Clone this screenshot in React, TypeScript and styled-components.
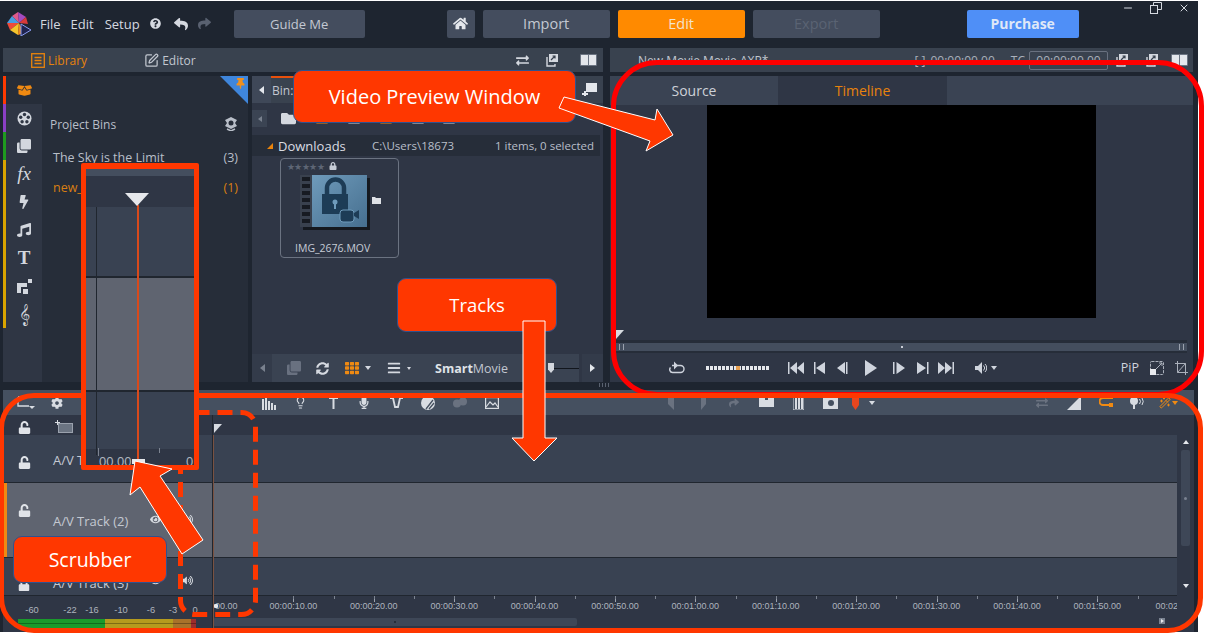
import React, { ReactNode } from "react";
import styled, { createGlobalStyle } from "styled-components";
import {
  FaBoxOpen, FaClone, FaBolt, FaMusic, FaHome, FaQuestionCircle, FaReply, FaShare, FaThumbtack,
  FaExchangeAlt, FaLock, FaUnlock, FaVolumeUp, FaEye, FaCog, FaMicrophone, FaSyncAlt, FaBars, FaTh,
  FaFolder,
} from "react-icons/fa";
import { SquarePen, Minus, X, Wand2, Lightbulb } from "lucide-react";

const GlobalStyle = createGlobalStyle`
  html, body { margin: 0; padding: 0; background: #ffffff; }
  body { width: 1212px; height: 642px; overflow: hidden; font-family: "Open Sans", "Noto Sans", sans-serif; }
  * { box-sizing: border-box; }
`;

const Page = styled.div`
  position: relative;
  width: 1212px;
  height: 642px;
  background: #fff;
  overflow: hidden;
  padding-top: 1px;
`;

const AppWindow = styled.div`
  width: 1198px;
  height: 631px;
  background: #1e2530;
  color: #c6ccd6;
  display: flex;
  flex-direction: column;
  padding: 0 1px 0 3px;
`;

const TitleBar = styled.div`
  height: 47px;
  flex: none;
  display: flex;
  align-items: center;
  position: relative;
  padding-bottom: 2px;
`;

const Logo = styled.svg`
  width: 24px;
  height: 24px;
  margin-left: 4px;
  flex: none;
`;

const MenuItem = styled.span<{ $ml: number }>`
  font-size: 13px;
  color: #d5d9e0;
  margin-left: ${(p) => p.$ml}px;
`;

const HeadButton = styled.div<{ $w: number; $ml: number; $bg?: string; $fg?: string; $bold?: boolean; $size?: number }>`
  width: ${(p) => p.$w}px;
  height: 28px;
  margin-left: ${(p) => p.$ml}px;
  background: ${(p) => p.$bg || "#444d5e"};
  color: ${(p) => p.$fg || "#c3c8d2"};
  font-size: ${(p) => p.$size || 13}px;
  font-weight: ${(p) => (p.$bold ? 700 : 400)};
  border-radius: 2px;
  display: flex;
  align-items: center;
  justify-content: center;
  flex: none;
`;

const HeadIcon = styled.span<{ $ml: number; $fg?: string }>`
  margin-left: ${(p) => p.$ml}px;
  color: ${(p) => p.$fg || "#d5d9e0"};
  display: flex;
`;

const WindowControls = styled.div`
  position: absolute;
  top: 0;
  right: 7px;
  display: flex;
  align-items: center;
  gap: 16px;
  height: 13px;
  color: #d5d9e0;
`;

const Upper = styled.div`
  height: 334px;
  flex: none;
  display: flex;
  gap: 7px;
  position: relative;
`;

const Grip = styled.span`
  position: absolute;
  left: 596px;
  bottom: -5px;
  width: 10px;
  height: 4px;
  background: repeating-linear-gradient(90deg, #59616f 0 1px, transparent 1px 3px);
`;

const LeftPanel = styled.div`
  width: 600px;
  flex: none;
  display: flex;
  flex-direction: column;
`;

const RightPanel = styled.div`
  flex: 1;
  min-width: 0;
  display: flex;
  flex-direction: column;
  margin-right: 4px;
`;

const TabBar = styled.div<{ $pr: number }>`
  height: 24px;
  flex: none;
  background: #39424f;
  display: flex;
  align-items: center;
  font-size: 12px;
  color: #c2c7d0;
  padding-right: ${(p) => p.$pr}px;
`;

const BarTab = styled.span<{ $ml: number; $active?: boolean }>`
  display: flex;
  align-items: center;
  gap: 3px;
  margin-left: ${(p) => p.$ml}px;
  color: ${(p) => (p.$active ? "#e8830c" : "#c2c7d0")};
`;

const Timecode = styled.span<{ $ml?: number }>`
  margin-left: ${(p) => p.$ml || 0}px;
  color: #aab0bb;
  font-size: 12px;
  white-space: nowrap;
`;

const TimecodeBox = styled.span`
  width: 79px;
  height: 19px;
  margin-left: 4px;
  border: 1px solid #697180;
  border-radius: 2px;
  display: flex;
  align-items: center;
  justify-content: center;
  color: #aab0bb;
`;

const BarSpacer = styled.div`
  flex: 1;
`;

const BarIcon = styled.span<{ $ml?: number }>`
  display: flex;
  margin-left: ${(p) => p.$ml || 0}px;
  color: #d4d8df;
`;

const SplitIcon = styled.span`
  width: 17px;
  height: 12px;
  display: flex;
  gap: 1px;
  padding: 1px;
  background: #6b7482;
  border-radius: 1px;

  &::before, &::after {
    content: "";
    flex: 1;
    background: #e4e7ec;
  }
`;

const LeftBody = styled.div`
  flex: 1;
  min-height: 0;
  margin-top: 4px;
  display: flex;
`;

const Rail = styled.div`
  width: 39px;
  flex: none;
  display: flex;
  flex-direction: column;
  background: #2f3644;
  position: relative;
  padding-left: 3px;
`;

const RailItem = styled.div<{ $active?: boolean; $stripe?: string }>`
  height: 28px;
  display: flex;
  align-items: center;
  justify-content: center;
  position: relative;
  color: ${(p) => (p.$active ? "#f08a12" : "#d3d7de")};
  background: ${(p) => (p.$active ? "#262d39" : "transparent")};
  font-family: "Liberation Serif", serif;
  font-size: 19px;

  &::before {
    content: "";
    position: absolute;
    left: -3px;
    top: 0;
    bottom: 0;
    width: 3px;
    background: ${(p) => p.$stripe || "transparent"};
  }
`;

const Bins = styled.div`
  width: 206px;
  flex: none;
  background: #262d39;
  position: relative;
  font-size: 12.5px;
  padding: 38px 0 0 8px;
`;

const Corner = styled.div`
  position: absolute;
  top: 0;
  right: 0;
  width: 0;
  height: 0;
  border-top: 28px solid #3f86dc;
  border-left: 28px solid transparent;
`;

const CornerPin = styled.span`
  position: absolute;
  top: 2px;
  right: 2px;
  color: #f0901e;
  display: flex;
`;

const BinsHead = styled.div`
  display: flex;
  justify-content: space-between;
  align-items: center;
  height: 20px;
  padding-right: 9px;
  margin-bottom: 8px;
  color: #b9bfc9;
  font-size: 12px;
`;

const BinRow = styled.div<{ $active?: boolean }>`
  display: flex;
  justify-content: space-between;
  height: 30px;
  align-items: center;
  padding: 0 10px 0 3px;
  color: ${(p) => (p.$active ? "#d97f12" : "#b9bfc9")};
`;

const Browser = styled.div`
  flex: 1;
  min-width: 0;
  margin-left: 4px;
  background: #2f3645;
  display: flex;
  flex-direction: column;
  font-size: 12px;
`;

const BinBar = styled.div`
  height: 27px;
  flex: none;
  background: #39424f;
  display: flex;
  align-items: stretch;
  color: #c2c7d0;
  padding-right: 6px;
`;

const BinCap = styled.span`
  width: 19px;
  flex: none;
  background: #3f4858;
  display: flex;
  align-items: center;
  justify-content: center;
  color: #e4e7ec;
`;

const BinLabel = styled.span`
  flex: 1;
  border-top: 2px solid transparent;
  border-image: linear-gradient(90deg, #e8500c 0 24px, transparent 24px) 1;
  display: flex;
  align-items: center;
  padding-left: 1px;
`;

const BinEndIcon = styled.span`
  display: flex;
  align-items: center;
  color: #e4e7ec;
`;

const BrowserTools = styled.div`
  height: 17px;
  margin-top: 7px;
  flex: none;
  display: flex;
  align-items: center;
  color: #d4d8df;
`;

const ToolCap = styled.span`
  width: 15px;
  height: 17px;
  background: #3b4453;
  color: #79818e;
  display: flex;
  align-items: center;
  justify-content: center;
`;

const ToolSlot = styled.span<{ $ml: number; $fg?: string }>`
  margin-left: ${(p) => p.$ml}px;
  color: ${(p) => p.$fg || "#d4d8df"};
  display: flex;
`;

const Caret = styled.span<{ $dir: "left" | "right" | "up" | "down"; $c?: string; $s?: number; $ml?: number }>`
  width: 0;
  height: 0;
  flex: none;
  margin-left: ${(p) => p.$ml || 0}px;
  border: ${(p) => p.$s || 4}px solid transparent;
  ${(p) => {
    const c = p.$c || "currentColor";
    const s = (p.$s || 4) + 1;
    if (p.$dir === "left") return `border-right: ${s}px solid ${c}; border-left-width: 0;`;
    if (p.$dir === "right") return `border-left: ${s}px solid ${c}; border-right-width: 0;`;
    if (p.$dir === "up") return `border-bottom: ${s}px solid ${c}; border-top-width: 0;`;
    return `border-top: ${s}px solid ${c}; border-bottom-width: 0;`;
  }}
`;

const CornerCaret = styled.span`
  width: 0;
  height: 0;
  border-bottom: 6px solid #e8830c;
  border-left: 6px solid transparent;
`;

const FolderHead = styled.div`
  height: 21px;
  flex: none;
  margin: 8px 3px 0 0;
  background: #262d39;
  display: flex;
  align-items: center;
  padding-left: 15px;
  color: #b9bfc9;
  font-size: 11.5px;
`;

const FolderName = styled.span`
  font-size: 13px;
  color: #dadde3;
  margin-left: 5px;
  width: 94px;
`;

const FolderInfo = styled.span<{ $w: number }>`
  width: ${(p) => p.$w}px;
  white-space: nowrap;
`;

const BrowserArea = styled.div`
  flex: 1;
  min-height: 0;
  padding: 2px 0 0 28px;
`;

const ThumbCard = styled.div`
  width: 119px;
  height: 100px;
  border: 1.5px solid #6b7381;
  border-radius: 4px;
  padding: 2px 6px 0;
  display: flex;
  flex-direction: column;
  color: #c6ccd6;
  font-size: 10.5px;
`;

const ThumbTop = styled.div`
  height: 10px;
  display: flex;
  align-items: center;
  gap: 5px;
  font-size: 9px;
  color: #5e6675;
  letter-spacing: -0.6px;
`;

const ThumbArt = styled.svg`
  width: 86px;
  height: 66px;
  margin: 1px 0 3px 8px;
`;

const ThumbName = styled.span`
  margin-left: 8px;
  white-space: nowrap;
`;

const BrowserFooter = styled.div`
  height: 28px;
  flex: none;
  background: #3a4352;
  display: flex;
  align-items: center;
  color: #d3d7de;
  font-size: 12px;
`;

const FooterCap = styled.span<{ $w: number }>`
  width: ${(p) => p.$w}px;
  height: 100%;
  flex: none;
  background: #333b4a;
  color: #79818e;
  display: flex;
  align-items: center;
  justify-content: center;
`;

const FooterEnd = styled(FooterCap)`
  margin-left: auto;
  color: #e4e7ec;
  border-left: 3px solid #2f3645;
`;

const FooterIcon = styled.span<{ $ml: number; $fg?: string }>`
  margin-left: ${(p) => p.$ml}px;
  color: ${(p) => p.$fg || "#d5d9e0"};
  display: flex;
  align-items: center;
  gap: 6px;
`;

const Smart = styled.span`
  margin-left: 24px;
  font-size: 12.5px;
  color: #c2c7d0;

  b {
    color: #dfe2e7;
  }
`;

const SlideKnob = styled.span`
  width: 32px;
  height: 10px;
  margin-left: 40px;
  position: relative;
  display: block;

  &::before {
    content: "";
    position: absolute;
    left: 0;
    right: 0;
    top: 5px;
    height: 1px;
    background: #12161d;
  }

  &::after {
    content: "";
    position: absolute;
    left: 0;
    top: 0;
    width: 6px;
    height: 10px;
    background: #d3d7de;
    clip-path: polygon(0 0, 100% 0, 100% 65%, 50% 100%, 0 65%);
  }
`;

const Tabs = styled.div`
  height: 29px;
  margin-top: 4px;
  flex: none;
  background: #3a4353;
  display: flex;
  font-size: 14px;
`;

const PreviewTab = styled.div<{ $w: number; $active?: boolean }>`
  width: ${(p) => p.$w}px;
  display: flex;
  align-items: center;
  justify-content: center;
  background: ${(p) => (p.$active ? "#2f3645" : "transparent")};
  color: ${(p) => (p.$active ? "#e8830c" : "#cdd1d8")};
`;

const PreviewBody = styled.div`
  flex: 1;
  min-height: 0;
  background: #2f3645;
  display: flex;
  flex-direction: column;
`;

const VideoWrap = styled.div`
  height: 213px;
  flex: none;
  display: flex;
  justify-content: center;
`;

const VideoScreen = styled.div`
  width: 389px;
  height: 100%;
  background: #000;
`;

const ScrubberMark = styled.div`
  height: 22px;
  flex: none;
  display: flex;
  align-items: flex-end;
  padding: 0 0 1px 6px;
`;

const Flag = styled.span`
  display: block;
  width: 0;
  height: 0;
  border-top: 9px solid #d7dbe1;
  border-right: 8px solid transparent;
`;

const ScrollTrack = styled.div`
  height: 13px;
  flex: none;
  background: #444e5e;
  border-top: 3px solid #262d39;
  border-bottom: 2px solid #262d39;
  margin: 0 6px;
  display: flex;
  align-items: center;
  justify-content: center;
  position: relative;

  &::before {
    content: "";
    width: 2px;
    height: 2px;
    background: #c9ced6;
  }
`;

const ScrollHandle = styled.span<{ $side: "left" | "right" }>`
  position: absolute;
  ${(p) => p.$side}: 3px;
  top: 1px;
  width: 5px;
  height: 6px;
  border-left: 1px solid #9aa1ad;
  border-right: 1px solid #9aa1ad;
`;

const Transport = styled.div`
  flex: 1;
  display: flex;
  align-items: center;
  color: #cfd4dd;
`;

const ShuttleBar = styled.div`
  width: 63px;
  height: 4px;
  margin-left: 21px;
  background: repeating-linear-gradient(90deg, #e6e8ec 0 3px, #2f3645 3px 4px);
  position: relative;

  &::after {
    content: "";
    position: absolute;
    left: 30px;
    top: 0;
    width: 4px;
    height: 4px;
    background: #e8a050;
  }
`;

const TransportIcon = styled.svg<{ $ml: number }>`
  margin-left: ${(p) => p.$ml}px;
  flex: none;
  fill: currentColor;
`;

const PipLabel = styled.span`
  margin-left: auto;
  font-size: 12.5px;
`;

const PipBox = styled.svg`
  margin-left: 11px;
  color: #aab0bb;
  flex: none;
`;

const PipEnd = styled.span`
  width: 5px;
  flex: none;
`;

const Timeline = styled.div`
  flex: 1;
  min-height: 0;
  margin: 8px 3px 0 0;
  display: flex;
  flex-direction: column;
  background: #2f3645;
`;

const TimelineTools = styled.div`
  height: 25px;
  flex: none;
  background: #455060;
  display: flex;
  align-items: center;
  color: #d8dce2;
`;

const TlIcon = styled.span<{ $ml: number; $w: number; $fg?: string }>`
  display: flex;
  align-items: center;
  justify-content: center;
  flex: none;
  width: ${(p) => p.$w}px;
  margin-left: ${(p) => p.$ml}px;
  color: ${(p) => p.$fg || "#d8dce2"};
`;

const TlGrid = styled.div`
  flex: 1;
  min-height: 0;
  display: flex;
`;

const TrackCol = styled.div`
  width: 210px;
  flex: none;
  display: flex;
  flex-direction: column;
  border-right: 1px solid #20262f;
`;

const TimeCol = styled.div`
  flex: 1;
  min-width: 0;
  display: flex;
  flex-direction: column;
  position: relative;

  &::before {
    content: "";
    position: absolute;
    left: 0;
    top: 20px;
    bottom: 0;
    width: 1px;
    background: #7a5242;
    z-index: 1;
  }
`;

const HeadRow = styled.div<{ $h: number; $sel?: boolean; $bg?: string }>`
  height: ${(p) => p.$h}px;
  flex: none;
  background: ${(p) => p.$bg || (p.$sel ? "#5f6470" : "#394252")};
  border-bottom: ${(p) => (p.$bg ? "none" : "1px solid #20262f")};
  color: #c4c9d2;
  font-size: 13px;
  position: relative;
  ${(p) => (p.$sel ? "box-shadow: inset 4px 0 0 #f08a12;" : "")}
`;

const LockIcon = styled.span<{ $top: number }>`
  position: absolute;
  left: 15px;
  top: ${(p) => p.$top}px;
  color: #e0e3e8;
  display: flex;
`;

const AddTrack = styled.span`
  position: absolute;
  left: 52px;
  top: 5px;
  color: #9aa1ad;
  display: flex;
`;

const TrackName = styled.span<{ $top: number }>`
  position: absolute;
  left: 50px;
  top: ${(p) => p.$top}px;
  white-space: nowrap;
`;

const TrackIcons = styled.span<{ $top: number }>`
  position: absolute;
  left: 147px;
  top: ${(p) => p.$top}px;
  display: flex;
  gap: 21px;
  color: #d6dae0;
`;

const RulerTop = styled.div`
  height: 20px;
  flex: none;
  background: #2f3645;
  padding: 9px 0 0 1px;
`;

const Lanes = styled.div`
  flex: 1;
  min-height: 0;
  display: flex;
`;

const LaneStack = styled.div`
  flex: 1;
  min-width: 0;
  display: flex;
  flex-direction: column;
`;

const VScroll = styled.div`
  width: 17px;
  flex: none;
  background: #2f3645;
  display: flex;
  flex-direction: column;
  align-items: center;
  color: #e4e7ec;
  padding-top: 5px;
`;

const VThumb = styled.div`
  width: 9px;
  height: 96px;
  margin: 6px 0 38px;
  background: #3e4757;
  border-radius: 2px;
  display: flex;
  align-items: center;
  justify-content: center;

  &::before {
    content: "";
    width: 3px;
    height: 3px;
    background: #7a8290;
    border-radius: 50%;
  }
`;

const Lane = styled.div<{ $h: number; $sel?: boolean }>`
  height: ${(p) => p.$h}px;
  flex: none;
  background: ${(p) => (p.$sel ? "#5f6470" : "#394252")};
  border-bottom: 1px solid #20262f;
`;

const RulerRow = styled.div`
  height: 36px;
  flex: none;
  background: #2f3645;
  display: flex;
  flex-direction: column;
  position: relative;
`;

const Ruler = styled.div`
  height: 22px;
  flex: none;
  width: 964px;
  display: flex;
  background:
    repeating-linear-gradient(90deg, #7d8491 0 1px, transparent 1px 40.2px) 0 0 / 100% 3px no-repeat,
    repeating-linear-gradient(90deg, #9aa1ad 0 1px, transparent 1px 80.4px) 0 0 / 100% 6px no-repeat;
  overflow: hidden;
`;

const RulerLabel = styled.span`
  width: 80.4px;
  flex: none;
  text-align: center;
  font-family: "Liberation Sans", sans-serif;
  font-size: 9px;
  color: #aeb4be;
  padding-top: 5px;

  &:first-child {
    width: 40.2px;
    text-align: left;
    padding-left: 2px;
  }

  &:last-child {
    width: 40px;
    text-align: left;
    padding-left: 18px;
  }
`;

const RulerKnob = styled.span`
  position: absolute;
  left: 1px;
  top: 8px;
  width: 4px;
  height: 4px;
  background: #e6e8ec;
  border-radius: 1px;
`;

const HScroll = styled.div`
  height: 8px;
  width: 364px;
  background: #3e4757;
  border-radius: 2px;
  display: flex;
  align-items: center;
  justify-content: center;

  &::before {
    content: "";
    width: 2px;
    height: 2px;
    background: #262d39;
  }
`;

const Nudge = styled.span`
  position: absolute;
  right: 29px;
  bottom: 8px;
  width: 6px;
  height: 6px;
  background: #7a8290;
  color: #e8eaee;
  display: flex;
  align-items: center;
  justify-content: center;
`;

const MeterCol = styled.div`
  flex: 1;
  position: relative;
  background: #2f3645;
  font-family: "Liberation Sans", sans-serif;
  font-size: 9.3px;
  color: #aeb4be;
`;

const MeterLabel = styled.span<{ $x: number }>`
  position: absolute;
  top: 9px;
  left: ${(p) => p.$x}px;
  transform: translateX(-50%);
`;

const MeterBar = styled.div`
  position: absolute;
  left: 15px;
  bottom: 4px;
  height: 9px;
  display: flex;

  &::after {
    content: "";
    position: absolute;
    left: 0;
    right: 0;
    top: 4px;
    height: 1px;
    background: rgba(0, 0, 0, 0.3);
  }
`;

const MeterSeg = styled.span<{ $w: number; $c: string }>`
  width: ${(p) => p.$w}px;
  background: ${(p) => p.$c};
`;

/* annotations drawn over the screenshot */
const Callout = styled.div<{ $x: number; $y: number; $w: number; $h: number; $size: number }>`
  position: absolute;
  left: ${(p) => p.$x}px;
  top: ${(p) => p.$y}px;
  width: ${(p) => p.$w}px;
  height: ${(p) => p.$h}px;
  background: #ff3700;
  border: 1px solid #2f528f;
  border-radius: 9px;
  color: #fff;
  font-size: ${(p) => p.$size}px;
  display: flex;
  align-items: center;
  justify-content: center;
  padding-bottom: 1px;
  z-index: 6;
`;

const Frame = styled.div<{ $x: number; $y: number; $w: number; $h: number; $c: string; $r: number; $b: number; $z: number }>`
  position: absolute;
  left: ${(p) => p.$x}px;
  top: ${(p) => p.$y}px;
  width: ${(p) => p.$w}px;
  height: ${(p) => p.$h}px;
  border: ${(p) => p.$b}px solid ${(p) => p.$c};
  border-radius: ${(p) => p.$r}px;
  z-index: ${(p) => p.$z};
`;

const Magnifier = styled.div`
  position: absolute;
  left: 81px;
  top: 163px;
  width: 118px;
  height: 307px;
  border: 5px solid #ff3700;
  border-top-width: 6px;
  border-radius: 2px;
  background: #394252;
  z-index: 5;
  display: flex;
  flex-direction: column;
  overflow: hidden;
`;

const MagBand = styled.div<{ $h: number; $bg: string; $line?: boolean }>`
  height: ${(p) => p.$h}px;
  flex: none;
  background: ${(p) => p.$bg};
  border-bottom: ${(p) => (p.$line ? "2px solid #20262f" : "none")};
`;

const MagRule = styled.div`
  position: absolute;
  left: 10px;
  top: 38px;
  bottom: 10px;
  width: 1px;
  background: #20262f;
`;

const MagCursor = styled.div`
  position: absolute;
  left: 51px;
  top: 36px;
  bottom: 0;
  width: 2px;
  background: #d84a1c;
`;

const MagHandle = styled.div`
  position: absolute;
  left: 39px;
  top: 24px;
  width: 0;
  height: 0;
  border-left: 12px solid transparent;
  border-right: 12px solid transparent;
  border-top: 13px solid #e6e8ec;
`;

const MagTick = styled.span<{ $x: number; $h: number }>`
  position: absolute;
  left: ${(p) => p.$x}px;
  top: 279px;
  width: 1px;
  height: ${(p) => p.$h}px;
  background: #7d8491;
`;

const MagTime = styled.span<{ $x: number }>`
  position: absolute;
  left: ${(p) => p.$x}px;
  bottom: -4px;
  font-family: "Liberation Sans", sans-serif;
  font-size: 13px;
  color: #aeb4be;
`;

const MagKnob = styled.span`
  position: absolute;
  left: 46px;
  bottom: 1px;
  width: 13px;
  height: 5px;
  background: #e6e8ec;
`;

const Overlay = styled.svg<{ $z: number }>`
  position: absolute;
  left: 0;
  top: 0;
  width: 1212px;
  height: 642px;
  z-index: ${(p) => p.$z};
  pointer-events: none;
`;

const Glyph = ({ w, h, children }: { w: number; h: number; children: ReactNode }) => (
  <svg width={w} height={h} viewBox={`0 0 ${w} ${h}`} fill="currentColor">
    {children}
  </svg>
);

const PopIcon = () => (
  <Glyph w={13} h={13}>
    <path d="M2 3v9h8v-2" fill="none" stroke="currentColor" strokeWidth="1.4" />
    <rect x="4" y="0" width="9" height="8" />
    <path d="M6 6l4-4M7.500 2H10v2.500" fill="none" stroke="#39424f" strokeWidth="1.2" />
  </Glyph>
);

const ReelIcon = () => (
  <Glyph w={15} h={15}>
    <circle cx="7.500" cy="7.500" r="7" />
    <g fill="#2f3644">
      <circle cx="7.500" cy="3.500" r="1.700" />
      <circle cx="11.300" cy="6.300" r="1.700" />
      <circle cx="9.900" cy="10.800" r="1.700" />
      <circle cx="5.100" cy="10.800" r="1.700" />
      <circle cx="3.700" cy="6.300" r="1.700" />
    </g>
  </Glyph>
);

const LibraryIcon = () => (
  <svg width="14" height="15" viewBox="0 0 14 15" fill="none" stroke="currentColor" strokeWidth="1.3">
    <rect x="0.700" y="0.700" width="12.600" height="13.600" />
    <path d="M3.500 4.500h7M3.500 7.500h7M3.500 10.500h7" />
  </svg>
);

const OverlayIcon = () => (
  <Glyph w={15} h={15}>
    <rect x="0" y="4" width="10" height="10" />
    <rect x="4" y="8" width="6" height="6" fill="#2f3644" />
    <rect x="6" y="10" width="5" height="5" />
    <rect x="11" y="0" width="4" height="4" />
  </Glyph>
);

const BinSettingsIcon = () => (
  <Glyph w={16} h={14}>
    <path d="M8 0l6 3-2 3 2 3-6 3-6-3 2-3-2-3z" />
    <circle cx="8" cy="6" r="2.500" fill="#262d39" />
    <path d="M4 12l4 2 4-2" fill="none" stroke="currentColor" strokeWidth="1.500" />
  </Glyph>
);

const AddBinIcon = () => (
  <Glyph w={15} h={13}>
    <rect x="4" y="0" width="11" height="9" />
    <path d="M2 8h2v2h2v2H4v1H2v-1H0v-2h2z" />
  </Glyph>
);

const AddTrackIcon = () => (
  <svg width="18" height="13" viewBox="0 0 18 13" fill="none" stroke="currentColor">
    <rect x="3.500" y="3.500" width="14" height="9" fill="#6b7482" />
    <path d="M2.500 0v5M0 2.500h5" stroke="#d8dce2" />
  </svg>
);

const RestoreIcon = () => (
  <svg width="12" height="12" viewBox="0 0 12 12" fill="none" stroke="currentColor" strokeWidth="1">
    <rect x="0.500" y="3.500" width="7" height="8" />
    <path d="M3.500 3.500v-3h8v7h-4" />
  </svg>
);

const RepeatIcon = () => (
  <TransportIcon $ml={59} width="16" height="13" viewBox="0 0 16 13">
    <path d="M3 4.500h8.500a3.500 3.500 0 0 1 0 7h-8a3 3 0 0 1-2-5" fill="none" stroke="currentColor" strokeWidth="1.400" />
    <path d="M5 0.500l4 4-4 4z" />
  </TransportIcon>
);

const TrackModeIcon = () => (
  <svg width="18" height="15" viewBox="0 0 18 15" fill="none" stroke="currentColor" strokeWidth="1.300">
    <path d="M1 2h14M1 2v9h11" />
    <path d="M12 11h6l-3 3z" fill="currentColor" stroke="none" />
  </svg>
);

const Shield = () => (
  <Glyph w={7} h={14}>
    <path d="M0 0h7v9l-3.500 5L0 9z" />
  </Glyph>
);

const toolbar: [number, number, ReactNode, string?][] = [
  [17, 35, <TrackModeIcon />],
  [51, 63, <FaCog size={12} />],
  [262, 276, <Glyph w={14} h={14}><path d="M0 3h2v11H0zM3 0h2v14H3zM6 5h2v9H6zM9 7h2v7H9zM12 9h2v5h-2z" /></Glyph>],
  [294, 307, <Lightbulb size={13} />],
  [329, 338, <Glyph w={9} h={12}><path d="M0 0h9v2H5.500v10H3.500V2H0z" /></Glyph>],
  [358, 370, <FaMicrophone size={13} />],
  [390, 403, <svg width="13" height="12" viewBox="0 0 13 12" fill="none" stroke="currentColor" strokeWidth="1.800"><path d="M0 1h3l2 9h3l2-9h3" /></svg>],
  [421, 435, <Glyph w={14} h={14}><circle cx="7" cy="7" r="7" /><path d="M5 13l7-9M8 13l5-6" stroke="#455060" strokeWidth="1.300" /></Glyph>],
  [453, 467, <Glyph w={14} h={11}><circle cx="4" cy="6.500" r="4" /><circle cx="10" cy="4.500" r="4" /></Glyph>, "#6a7280"],
  [485, 499, <svg width="14" height="12" viewBox="0 0 14 12" fill="none" stroke="currentColor" strokeWidth="1.200"><rect x="0.600" y="0.600" width="12.800" height="10.800" /><path d="M1 10l4-5 3 3 2-2 3 4" /></svg>],
  [668, 674, <Glyph w={6} h={14}><path d="M0 0h6v14L0 8z" /></Glyph>, "#6a7280"],
  [701, 706, <Glyph w={5} h={14}><path d="M5 0H0v14l5-6z" /></Glyph>, "#6a7280"],
  [728, 739, <FaShare size={10} />, "#6a7280"],
  [759, 774, <Glyph w={15} h={9}><path d="M0 0h6v2h3V0h6v9H0z" /></Glyph>],
  [793, 804, <Glyph w={11} h={14}><path d="M0 0h11v14H0z" fill="none" stroke="currentColor" /><path d="M2 1h2v12H2zM5 1h2v12H5zM8 1h2v12H8z" /></Glyph>],
  [823, 838, <Glyph w={15} h={12}><rect width="15" height="12" y="0" /><circle cx="8" cy="6" r="3" fill="#455060" /></Glyph>],
  [852, 859, <Shield />, "#e8461e"],
  [869, 875, <Caret $dir="down" $s={3} />],
  [1034, 1049, <FaExchangeAlt size={12} />, "#6a7280"],
  [1067, 1081, <Glyph w={14} h={14}><path d="M14 0v14H0z" /></Glyph>],
  [1099, 1113, <svg width="14" height="11" viewBox="0 0 14 11" fill="none" stroke="currentColor" strokeWidth="2"><path d="M14 1H4a3.500 3.500 0 0 0 0 7h9" /><rect x="10" y="6" width="4" height="4" fill="currentColor" stroke="none" /></svg>, "#f08a12"],
  [1130, 1144, <Glyph w={14} h={12}><circle cx="4" cy="4" r="4" /><path d="M3 7h2v5H3z" /><path d="M9.500 2a4 4 0 0 1 0 5M12 1a6 6 0 0 1 0 7" fill="none" stroke="currentColor" /></Glyph>],
  [1159, 1171, <Wand2 size={12} />, "#f08a12"],
  [1172, 1178, <Caret $dir="down" $s={3} $c="#f08a12" />],
];

const rulerLabels = [
  "00.00", "00:00:10.00", "00:00:20.00", "00:00:30.00", "00:00:40.00", "00:00:50.00", "00:01:00.00",
  "00:01:10.00", "00:01:20.00", "00:01:30.00", "00:01:40.00", "00:01:50.00", "00:02",
];

const meterLabels: [string, number][] = [
  ["-60", 29], ["-22", 67], ["-16", 89], ["-10", 118], ["-6", 148], ["-3", 170], ["0", 192],
];

export default function App() {
  let toolEnd = 3;

  return (
    <Page>
      <GlobalStyle />
      <AppWindow>
        <TitleBar>
          <Logo viewBox="0 0 24 24">
            <polygon points="5,4 11,0 12,11" fill="#e05a8a" />
            <polygon points="11,0 19,5 12,11" fill="#a44bc0" />
            <polygon points="19,5 21,12 12,11" fill="#d83a3a" />
            <polygon points="0,11 5,4 12,11" fill="#4a9de0" />
            <polygon points="0,11 12,11 3,18" fill="#ef4a3a" />
            <polygon points="3,18 12,11 11,23" fill="#f5c42c" />
            <polygon points="12,11 11,23 17,21" fill="#f08a1c" />
            <polygon points="14,12 24,18 14,24" fill="#1f2450" stroke="#8a9cf0" strokeWidth="1" />
          </Logo>
          <MenuItem $ml={9}>File</MenuItem>
          <MenuItem $ml={10}>Edit</MenuItem>
          <MenuItem $ml={11}>Setup</MenuItem>
          <HeadIcon $ml={10}><FaQuestionCircle size={11} /></HeadIcon>
          <HeadIcon $ml={13}><FaReply size={14} /></HeadIcon>
          <HeadIcon $ml={10} $fg="#596170"><FaShare size={13} /></HeadIcon>
          <HeadButton $w={131} $ml={23}>Guide Me</HeadButton>
          <HeadButton $w={28} $ml={82}><FaHome size={15} color="#e4e7ec" /></HeadButton>
          <HeadButton $w={127} $ml={8} $size={14.5}>Import</HeadButton>
          <HeadButton $w={127} $ml={8} $bg="#ff8a00" $fg="#f3e3cc" $size={14.5}>Edit</HeadButton>
          <HeadButton $w={127} $ml={8} $fg="#5a6373" $size={14.5}>Export</HeadButton>
          <HeadButton $w={112} $ml={87} $bg="#4f8ff7" $fg="#dfe8f7" $bold $size={14}>Purchase</HeadButton>
          <WindowControls>
            <Minus size={12} />
            <RestoreIcon />
            <X size={12} />
          </WindowControls>
        </TitleBar>

        <Upper>
          <LeftPanel>
            <TabBar $pr={6}>
              <BarTab $ml={28} $active><LibraryIcon />Library</BarTab>
              <BarTab $ml={57}><SquarePen size={15} />Editor</BarTab>
              <BarSpacer />
              <BarIcon><FaExchangeAlt size={13} /></BarIcon>
              <BarIcon $ml={16}><PopIcon /></BarIcon>
              <BarIcon $ml={22}><SplitIcon /></BarIcon>
            </TabBar>
            <LeftBody>
              <Rail>
                <RailItem $active $stripe="#ff3a00"><FaBoxOpen size={15} /></RailItem>
                <RailItem $stripe="#8a3fc4"><ReelIcon /></RailItem>
                <RailItem $stripe="#1f9a1f"><FaClone size={14} /></RailItem>
                <RailItem $stripe="#d9a400"><i>fx</i></RailItem>
                <RailItem $stripe="#d9a400"><FaBolt size={14} /></RailItem>
                <RailItem $stripe="#d9a400"><FaMusic size={14} /></RailItem>
                <RailItem $stripe="#d9a400"><b>T</b></RailItem>
                <RailItem $stripe="#d9a400"><OverlayIcon /></RailItem>
                <RailItem $stripe="#d9a400">𝄞</RailItem>
              </Rail>
              <Bins>
                <Corner />
                <CornerPin><FaThumbtack size={11} /></CornerPin>
                <BinsHead>Project Bins<BinSettingsIcon /></BinsHead>
                <BinRow>The Sky is the Limit<span>(3)</span></BinRow>
                <BinRow $active>new_<span>(1)</span></BinRow>
              </Bins>
              <Browser>
                <BinBar>
                  <BinCap><Caret $dir="left" $c="#e4e7ec" /></BinCap>
                  <BinLabel>Bin:</BinLabel>
                  <BinEndIcon><AddBinIcon /></BinEndIcon>
                </BinBar>
                <BrowserTools>
                  <ToolCap><Caret $dir="left" $s={3} /></ToolCap>
                  <ToolSlot $ml={14}><FaFolder size={15} /></ToolSlot>
                  <ToolSlot $ml={20} $fg="#f08a12"><FaFolder size={12} /></ToolSlot>
                  <ToolSlot $ml={20}><FaFolder size={12} /></ToolSlot>
                  <ToolSlot $ml={20} $fg="#f08a12"><FaFolder size={12} /></ToolSlot>
                  <ToolSlot $ml={20}><FaFolder size={12} /></ToolSlot>
                  <ToolSlot $ml={19}><FaFolder size={12} /></ToolSlot>
                </BrowserTools>
                <FolderHead>
                  <CornerCaret />
                  <FolderName>Downloads</FolderName>
                  <FolderInfo $w={123}>C:\Users\18673</FolderInfo>
                  <FolderInfo $w={100}>1 items, 0 selected</FolderInfo>
                </FolderHead>
                <BrowserArea>
                  <ThumbCard>
                    <ThumbTop>★★★★★<FaLock size={8} color="#c6ccd6" /></ThumbTop>
                    <ThumbArt viewBox="0 0 86 66">
                      <defs>
                        <linearGradient id="thumbFill" x1="0" y1="0" x2="1" y2="1">
                          <stop offset="0" stopColor="#6f9bbb" />
                          <stop offset="1" stopColor="#466f8f" />
                        </linearGradient>
                      </defs>
                      <rect x="8" y="6" width="67" height="52" fill="#15191f" />
                      <rect x="5" y="3" width="12" height="52" fill="#39414e" />
                      {[5, 12, 19, 26, 33, 40, 47].map((y) => (
                        <rect key={y} x="7" y={y} width="8" height="4" fill="#171b22" />
                      ))}
                      <rect x="17" y="3" width="55" height="52" fill="url(#thumbFill)" />
                      <path d="M32 22v-6a8.500 8.500 0 0 1 17 0v6" fill="none" stroke="#1d3c56" strokeWidth="4.500" />
                      <rect x="27" y="22" width="26" height="20" fill="#1d3c56" />
                      <circle cx="40" cy="30" r="2.500" fill="#6f9bbb" />
                      <rect x="39" y="30" width="2" height="7" fill="#6f9bbb" />
                      <rect x="45" y="38" width="14" height="12" rx="3" fill="#1d3c56" stroke="#6f9bbb" />
                      <path d="M59 41l5-3v9l-5-3z" fill="#1d3c56" />
                      <path d="M77 25h3l1 1h5v6h-9z" fill="#dfe2e7" />
                    </ThumbArt>
                    <ThumbName>IMG_2676.MOV</ThumbName>
                  </ThumbCard>
                </BrowserArea>
                <BrowserFooter>
                  <FooterCap $w={20}><Caret $dir="left" $s={4} /></FooterCap>
                  <FooterIcon $ml={15} $fg="#697180"><FaClone size={14} /></FooterIcon>
                  <FooterIcon $ml={15}><FaSyncAlt size={13} /></FooterIcon>
                  <FooterIcon $ml={16} $fg="#f08a12"><FaTh size={14} /><Caret $dir="down" $s={3} $c="#d5d9e0" /></FooterIcon>
                  <FooterIcon $ml={16}><FaBars size={14} /><Caret $dir="down" $s={2} /></FooterIcon>
                  <Smart><b>Smart</b>Movie</Smart>
                  <SlideKnob />
                  <FooterEnd $w={24}><Caret $dir="right" $s={4} /></FooterEnd>
                </BrowserFooter>
              </Browser>
            </LeftBody>
          </LeftPanel>

          <RightPanel>
            <TabBar $pr={5}>
              <BarTab $ml={28}>New Movie Movie.AXP*</BarTab>
              <BarSpacer />
              <Timecode>{"[ ]"}</Timecode>
              <Timecode $ml={5}>00:00:00.00</Timecode>
              <Timecode $ml={16}>TC</Timecode>
              <TimecodeBox>00:00:00.00</TimecodeBox>
              <BarIcon $ml={7}><PopIcon /></BarIcon>
              <BarIcon $ml={17}><PopIcon /></BarIcon>
              <BarIcon $ml={13}><SplitIcon /></BarIcon>
            </TabBar>
            <Tabs>
              <PreviewTab $w={168}>Source</PreviewTab>
              <PreviewTab $w={169} $active>Timeline</PreviewTab>
            </Tabs>
            <PreviewBody>
              <VideoWrap><VideoScreen /></VideoWrap>
              <ScrubberMark><Flag /></ScrubberMark>
              <ScrollTrack>
                <ScrollHandle $side="left" />
                <ScrollHandle $side="right" />
              </ScrollTrack>
              <Transport>
                <RepeatIcon />
                <ShuttleBar />
                <TransportIcon $ml={19} width="16" height="12" viewBox="0 0 16 12"><path d="M0 0h1.500v12H0zM2 6l7-6v12zM9 6l7-6v12z" /></TransportIcon>
                <TransportIcon $ml={10} width="11" height="12" viewBox="0 0 11 12"><path d="M0 0h1.500v12H0zM2 6l9-6v12z" /></TransportIcon>
                <TransportIcon $ml={12} width="12" height="12" viewBox="0 0 12 12"><path d="M0 6l8-6v12zM9 0h1.500v12H9z" /></TransportIcon>
                <TransportIcon $ml={16} width="12" height="16" viewBox="0 0 12 16"><path d="M0 0l12 8-12 8z" /></TransportIcon>
                <TransportIcon $ml={16} width="12" height="12" viewBox="0 0 12 12"><path d="M0 0h1.500v12H0zM3.500 0l8.500 6-8.500 6z" /></TransportIcon>
                <TransportIcon $ml={12} width="12" height="12" viewBox="0 0 12 12"><path d="M0 0l9 6-9 6zM10 0h1.500v12H10z" /></TransportIcon>
                <TransportIcon $ml={9} width="16" height="12" viewBox="0 0 16 12"><path d="M0 0l7 6-7 6zM7 0l7 6-7 6zM14.500 0H16v12h-1.500z" /></TransportIcon>
                <TransportIcon $ml={21} width="12" height="12" viewBox="0 0 12 12"><path d="M0 4h3l4-4v12L3 8H0z" /><path d="M8.500 3.500a3.500 3.500 0 0 1 0 5M10 2a5.500 5.500 0 0 1 0 8" fill="none" stroke="currentColor" /></TransportIcon>
                <Caret $dir="down" $s={3} $ml={4} />
                <PipLabel>PiP</PipLabel>
                <PipBox width="14" height="14" viewBox="0 0 14 14" fill="none" stroke="currentColor">
                  <rect x="0.500" y="0.500" width="13" height="13" rx="1" strokeDasharray="3 1" />
                  <rect x="0" y="8" width="6" height="6" fill="#e8eaee" stroke="none" />
                  <path d="M6 8l6-6M9 2h3v3" />
                </PipBox>
                <PipBox width="13" height="14" viewBox="0 0 13 14" fill="none" stroke="currentColor">
                  <path d="M2.500 0v11.500H13M0 2.500h10.500V14M2.500 11.500l8-9" />
                </PipBox>
                <PipEnd />
              </Transport>
            </PreviewBody>
          </RightPanel>
          <Grip />
        </Upper>

        <Timeline>
          <TimelineTools>
            {toolbar.map(([start, end, node, color]) => {
              const gap = start - toolEnd;
              toolEnd = end;
              return <TlIcon key={start} $ml={gap} $w={end - start} $fg={color}>{node}</TlIcon>;
            })}
          </TimelineTools>
          <TlGrid>
            <TrackCol>
              <HeadRow $h={20} $bg="#2f3645">
                <LockIcon $top={6}><FaUnlock size={13} /></LockIcon>
                <AddTrack><AddTrackIcon /></AddTrack>
              </HeadRow>
              <HeadRow $h={48}>
                <LockIcon $top={21}><FaUnlock size={13} /></LockIcon>
                <TrackName $top={16}>A/V T</TrackName>
              </HeadRow>
              <HeadRow $h={75} $sel>
                <LockIcon $top={21}><FaUnlock size={13} /></LockIcon>
                <TrackName $top={29}>A/V Track (2)</TrackName>
                <TrackIcons $top={31}><FaEye size={11} /><FaVolumeUp size={11} /></TrackIcons>
              </HeadRow>
              <HeadRow $h={38}>
                <LockIcon $top={21}><FaLock size={12} /></LockIcon>
                <TrackName $top={16}>A/V Track (3)</TrackName>
                <TrackIcons $top={17}><FaEye size={11} /><FaVolumeUp size={11} /></TrackIcons>
              </HeadRow>
              <MeterCol>
                {meterLabels.map(([text, x]) => (
                  <MeterLabel key={text} $x={x}>{text}</MeterLabel>
                ))}
                <MeterBar>
                  <MeterSeg $w={87} $c="#1a9a2c" />
                  <MeterSeg $w={68} $c="#b59b1e" />
                  <MeterSeg $w={18} $c="#a8722a" />
                  <MeterSeg $w={5} $c="#9c2c2c" />
                </MeterBar>
              </MeterCol>
            </TrackCol>
            <TimeCol>
              <RulerTop><Flag /></RulerTop>
              <Lanes>
                <LaneStack>
                  <Lane $h={48} />
                  <Lane $h={75} $sel />
                  <Lane $h={38} />
                </LaneStack>
                <VScroll>
                  <Caret $dir="up" $s={3} />
                  <VThumb />
                  <Caret $dir="down" $s={3} />
                </VScroll>
              </Lanes>
              <RulerRow>
                <Ruler>
                  {rulerLabels.map((text) => (
                    <RulerLabel key={text}>{text}</RulerLabel>
                  ))}
                </Ruler>
                <RulerKnob />
                <HScroll />
                <Nudge><Caret $dir="right" $s={2} /></Nudge>
              </RulerRow>
            </TimeCol>
          </TlGrid>
        </Timeline>
      </AppWindow>

      <Frame $x={611} $y={60} $w={593} $h={337} $c="#ff0000" $r={46} $b={5} $z={3} />
      <Frame $x={-1} $y={393} $w={1204} $h={240} $c="#ff3700" $r={35} $b={5} $z={4} />
      <Overlay $z={4} viewBox="0 0 1212 642">
        <rect x="180.500" y="412.500" width="75" height="202" rx="14" fill="none" stroke="#ff3700" strokeWidth="5" strokeDasharray="15 8" />
      </Overlay>

      <Magnifier>
        <MagBand $h={7} $bg="#444e5e" />
        <MagBand $h={31} $bg="#2f3645" />
        <MagBand $h={71} $bg="#394252" $line />
        <MagBand $h={114} $bg="#5f6470" $line />
        <MagBand $h={57} $bg="#394252" />
        <MagBand $h={20} $bg="#2f3645" />
        <MagRule />
        <MagCursor />
        <MagHandle />
        <MagTick $x={12} $h={8} />
        <MagTick $x={73} $h={5} />
        <MagTime $x={13}>00.00</MagTime>
        <MagTime $x={100}>0</MagTime>
        <MagKnob />
      </Magnifier>

      <Callout $x={293} $y={70} $w={283} $h={53} $size={20}>Video Preview Window</Callout>
      <Callout $x={397} $y={278} $w={160} $h={54} $size={18.500}>Tracks</Callout>
      <Callout $x={13} $y={536} $w={154} $h={47} $size={19.500}>Scrubber</Callout>

      <Overlay $z={7} viewBox="0 0 1212 642">
        <polygon points="564,97 655,120 657,109 673,135 646,151 650,141 559,108" fill="#ff3700" stroke="#fff" strokeWidth="1" />
        <polygon points="523,321 545,321 545,438 557,438 534,461 512,438 523,438" fill="#ff3700" stroke="#fff" strokeWidth="1" />
        <polygon points="135,461 172,469 160,476 203,540 182,554 140,487 130,495" fill="#ff3700" stroke="#fff" strokeWidth="1" />
      </Overlay>
    </Page>
  );
}
